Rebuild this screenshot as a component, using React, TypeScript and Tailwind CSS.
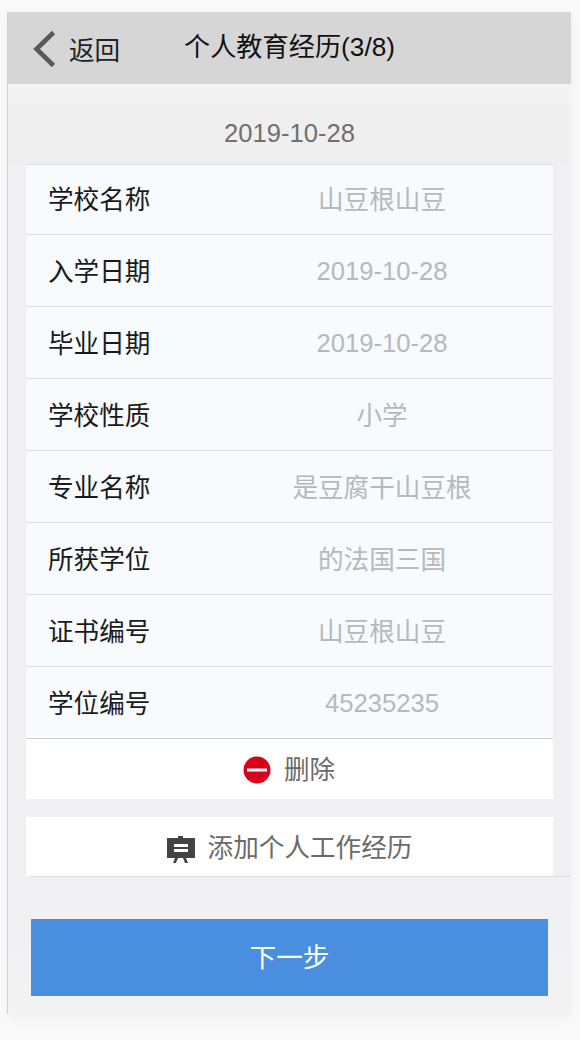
const rows: [string, string][] = [
  ["学校名称", "山豆根山豆"],
  ["入学日期", "2019-10-28"],
  ["毕业日期", "2019-10-28"],
  ["学校性质", "小学"],
  ["专业名称", "是豆腐干山豆根"],
  ["所获学位", "的法国三国"],
  ["证书编号", "山豆根山豆"],
  ["学位编号", "45235235"],
];

export default function App() {
  return (
    <div className="h-[1040px] w-[580px] overflow-hidden bg-[#f9f9f9] pt-3 pl-[7px] text-[25.6px] font-['Liberation_Sans','Noto_Sans_CJK_SC',sans-serif]">
      <div className="flex h-[1002px] w-[564px] flex-col border-l border-[#cfcfcf] bg-[#f0f0f3] shadow-[0_4px_12px_rgba(0,0,0,0.04)]">
        <header className="flex h-[72px] shrink-0 items-center bg-[#d6d6d6]">
          <svg width="26" height="40" viewBox="0 0 26 40" className="ml-6 mt-[2px] shrink-0" aria-hidden="true">
            <path d="M21.5 3.5 L4.5 20 L21.5 36.5" fill="none" stroke="#595959" strokeWidth="4.6" />
          </svg>
          <span className="ml-[11px] mt-[6px] w-[115px] shrink-0 text-[#222222]">返回</span>
          <h1 className="text-[26.2px] font-normal text-[#111111]">个人教育经历(3/8)</h1>
        </header>
        <div className="h-5 shrink-0 bg-[#f3f3f4]" />
        <div className="flex h-[60px] shrink-0 items-center justify-center bg-[#efeff0] pb-[2px] text-[#707070]">2019-10-28</div>
        <main className="ml-[18px] w-[527px] shrink-0">
          <ul className="border-t border-[#dbe0e4] bg-[#f7fbfe]">
            {rows.map(([label, value], i) => (
              <li key={label} className={`flex items-center border-b ${i === 7 ? "border-[#cfd2d4]" : "border-[#d8dcdf]"} ${i === 0 ? "h-[70px] pt-[2px]" : "h-[72px] pt-[3px]"}`}>
                <span className="ml-[22px] w-[206px] shrink-0 text-[#1a1a1a]">{label}</span>
                <span className={`w-[256px] shrink-0 text-center text-[#b5b9bc] ${/^[0-9-]+$/.test(value) ? "pb-[2px]" : ""}`}>{value}</span>
              </li>
            ))}
          </ul>
          <button className="flex h-[60px] w-full items-center justify-center bg-white pt-[2px] text-[#6a6a6a]">
            <svg width="28" height="28" viewBox="0 0 28 28" className="mr-[13px] ml-[-1px]" aria-hidden="true">
              <circle cx="14" cy="14" r="13.5" fill="#d9001b" />
              <rect x="4" y="12.5" width="20" height="3" fill="#ffffff" />
            </svg>
            删除
          </button>
          <button className="mt-[18px] flex h-[59px] w-full items-center justify-center bg-white pt-[3px] text-[#6a6a6a]">
            <svg width="28" height="28" viewBox="0 0 28 28" className="mr-[13px] mt-[3px]" aria-hidden="true">
              <path fillRule="evenodd" d="M0 2h11V0h5v2h12v20H19l2 5h-3l-2-5h-5l-2 5H6l2-5H0zM7 8v3h14V8zM7 13v3h14v-3z" fill="#444444" />
            </svg>
            添加个人工作经历
          </button>
        </main>
        <div className="ml-[22px] h-px w-[541px] shrink-0 bg-[#dfdfe2]" />
        <div className="h-6 shrink-0" />
        <div className="flex flex-1 flex-col bg-gradient-to-b from-[#f0f0f3] to-[#f3f3f3] pt-[18px]">
          <button className="ml-[23px] h-[77px] w-[517px] bg-[#4a8ee0] pt-[2px] text-[26.6px] text-white">下一步</button>
        </div>
      </div>
    </div>
  );
}
